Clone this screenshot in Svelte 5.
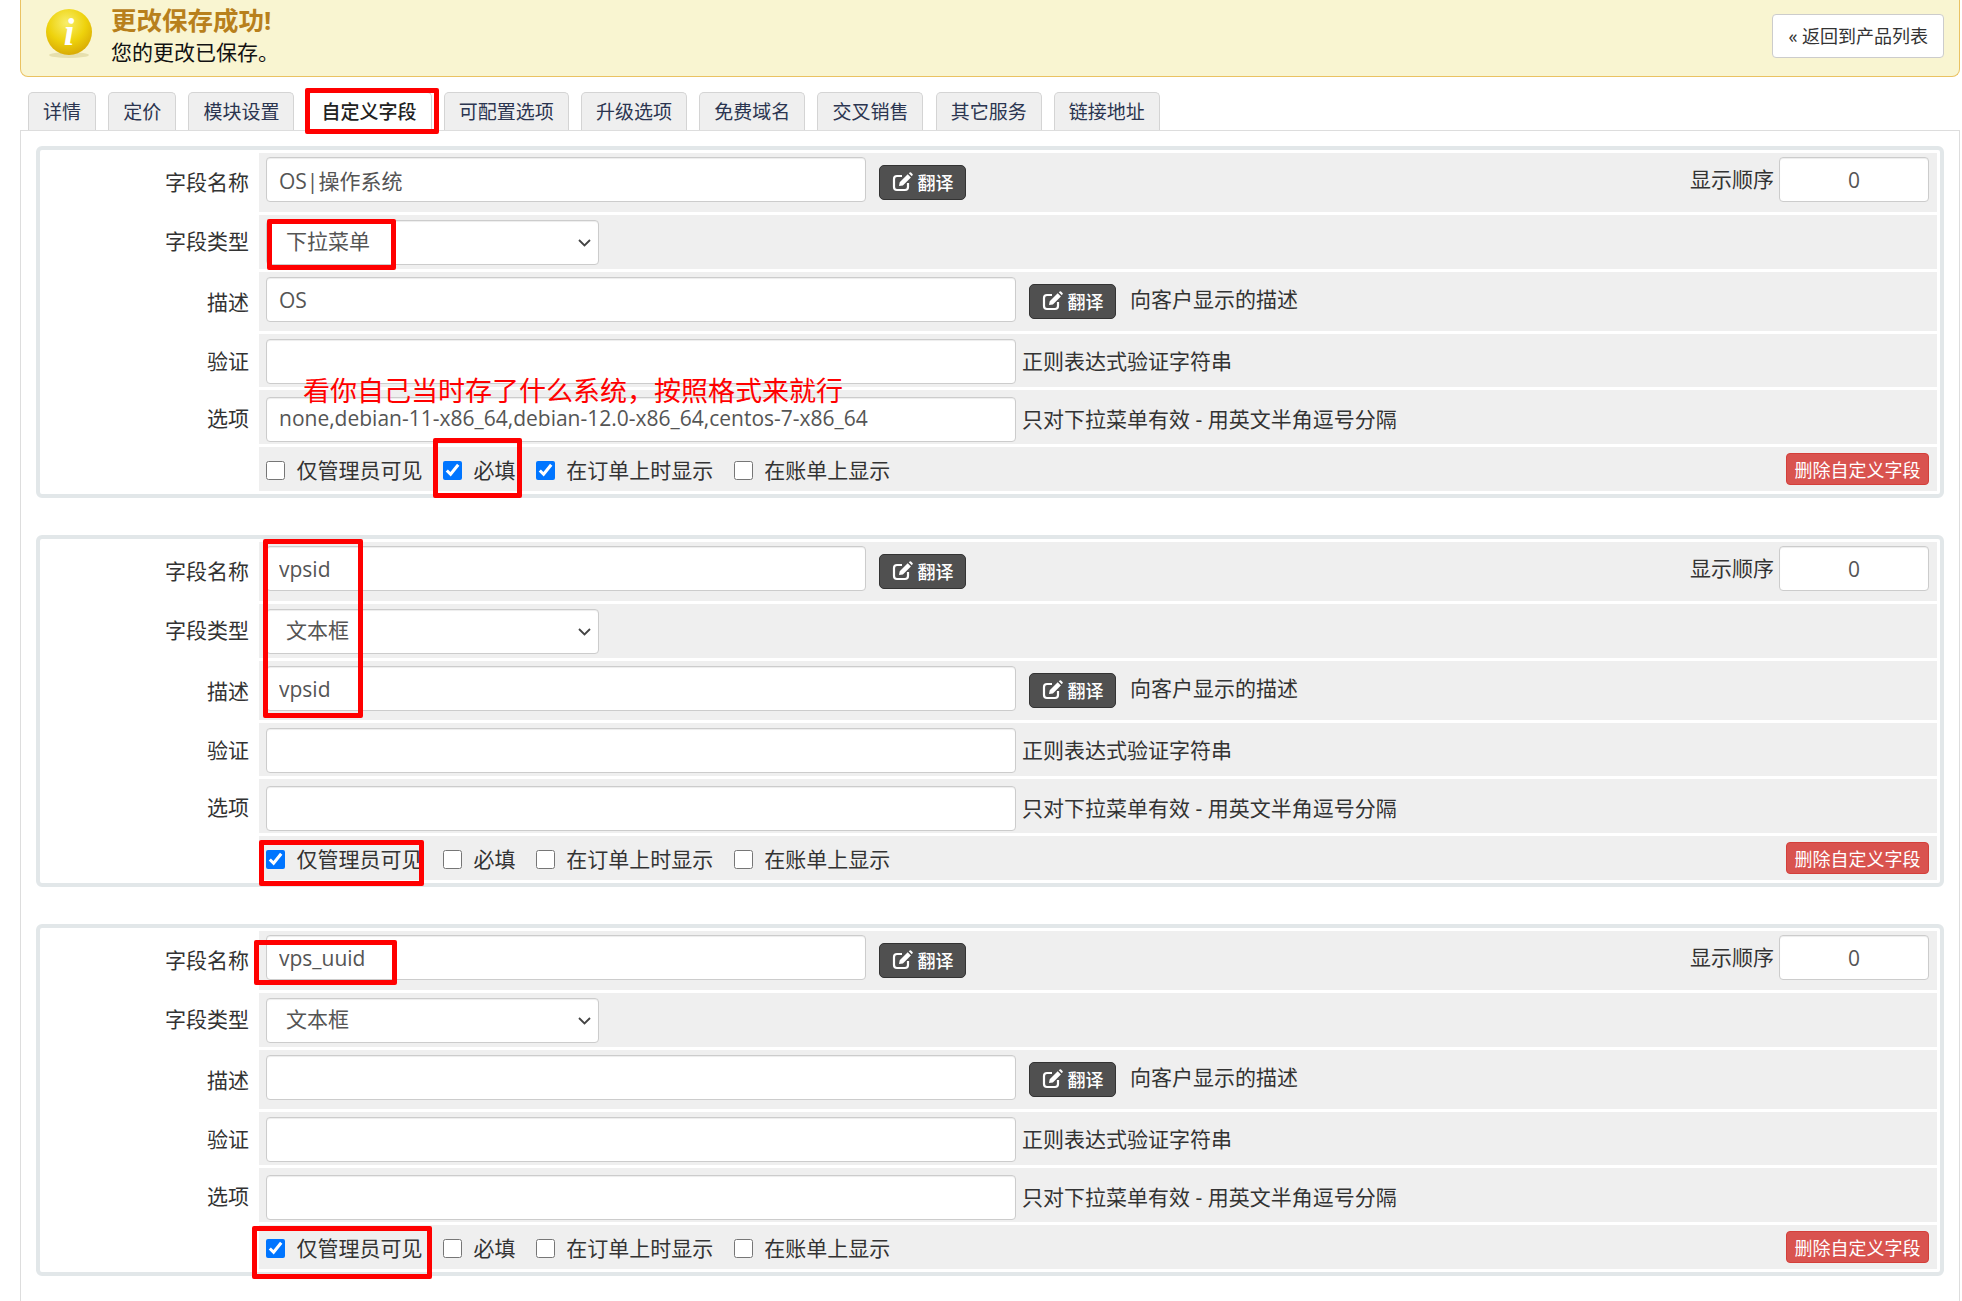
<script>
    const TABS = ["详情", "定价", "模块设置", "自定义字段", "可配置选项", "升级选项", "免费域名", "交叉销售", "其它服务", "链接地址"];

    const FIELDS = [
        { name: "OS|操作系统", type: "下拉菜单", desc: "OS", options: "none,debian-11-x86_64,debian-12.0-x86_64,centos-7-x86_64", admin: false, required: true, order: true },
        { name: "vpsid", type: "文本框", desc: "vpsid", options: "", admin: true, required: false, order: false },
        { name: "vps_uuid", type: "文本框", desc: "", options: "", admin: true, required: false, order: false },
    ];

    const MARKS = [
        { cls: "m-tab" },
        { cls: "m-select" },
        { cls: "m-required" },
        { cls: "m-vpsid" },
        { cls: "m-admin2" },
        { cls: "m-uuid" },
        { cls: "m-admin3" },
    ];
</script>

{#snippet editIcon()}
    <svg class="edit" viewBox="0 0 21 20" width="21" height="20" aria-hidden="true">
        <path d="M10 4H5a3 3 0 0 0-3 3v8a3 3 0 0 0 3 3h8a3 3 0 0 0 3-3v-4" fill="none" stroke="#fff" stroke-width="2.2" />
        <path d="M7 14l.7-3.8 8-8 3.2 3.2-8 8z M16.8 1.2l.9-.7a1 1 0 0 1 1.3 0l1.5 1.5a1 1 0 0 1 0 1.3l-.7.9z" fill="#fff" />
    </svg>
{/snippet}

{#snippet translateBtn()}
    <button class="translate" type="button">{@render editIcon()}<span>翻译</span></button>
{/snippet}

<div class="page">
    <div class="notice">
        <svg class="info" viewBox="0 0 46 50" width="46" height="50" aria-hidden="true">
            <defs>
                <radialGradient id="ball" cx="45%" cy="30%" r="75%">
                    <stop offset="0%" stop-color="#f8ee6a" />
                    <stop offset="55%" stop-color="#eed20c" />
                    <stop offset="100%" stop-color="#d5a404" />
                </radialGradient>
            </defs>
            <ellipse cx="23" cy="46" rx="20" ry="3" fill="#e6dfae" />
            <ellipse cx="23" cy="23" rx="23" ry="23" fill="url(#ball)" />
            <text x="23" y="36" text-anchor="middle" class="info-i">i</text>
        </svg>
        <div class="notice-text">
            <strong>更改保存成功!</strong>
            <span>您的更改已保存。</span>
        </div>
        <a class="back" href="#top">« 返回到产品列表</a>
    </div>

    <ul class="tabs">
        {#each TABS as tab, i}
            <li class:active={i === 3}>{tab}</li>
        {/each}
    </ul>

    <div class="panel">
        {#each FIELDS as field}
            <div class="box">
                <div class="row r1">
                    <label>字段名称</label>
                    <div class="cell">
                        <input class="w-name" type="text" value={field.name} />
                        {@render translateBtn()}
                        <span class="order-label">显示顺序</span>
                        <input class="w-order" type="text" value="0" />
                    </div>
                </div>
                <div class="row r2">
                    <label>字段类型</label>
                    <div class="cell">
                        <select class="w-type" value={field.type}>
                            <option>文本框</option>
                            <option>下拉菜单</option>
                            <option>密码</option>
                        </select>
                    </div>
                </div>
                <div class="row r3">
                    <label>描述</label>
                    <div class="cell">
                        <input class="w-wide" type="text" value={field.desc} />
                        {@render translateBtn()}
                        <span class="hint desc-hint">向客户显示的描述</span>
                    </div>
                </div>
                <div class="row r4">
                    <label>验证</label>
                    <div class="cell">
                        <input class="w-wide" type="text" value="" />
                        <span class="hint">正则表达式验证字符串</span>
                    </div>
                </div>
                <div class="row r5">
                    <label>选项</label>
                    <div class="cell">
                        <input class="w-wide" type="text" value={field.options} />
                        <span class="hint">只对下拉菜单有效 - 用英文半角逗号分隔</span>
                    </div>
                </div>
                <div class="row r6">
                    <div></div>
                    <div class="checks">
                        <label class="check"><input type="checkbox" checked={field.admin} />仅管理员可见</label>
                        <label class="check"><input type="checkbox" checked={field.required} />必填</label>
                        <label class="check"><input type="checkbox" checked={field.order} />在订单上时显示</label>
                        <label class="check"><input type="checkbox" />在账单上显示</label>
                        <button class="delete" type="button">删除自定义字段</button>
                    </div>
                </div>
            </div>
        {/each}
    </div>

    {#each MARKS as mark}
        <div class="mark {mark.cls}"></div>
    {/each}
    <div class="note">看你自己当时存了什么系统，按照格式来就行</div>
</div>

<style>
    :global(body) {
        background: #fff;
    }

    .page {
        position: relative;
        height: 1301px;
        overflow: hidden;
        padding: 0 2px 0 20px;
        box-sizing: border-box;
        font-family: "Open Sans", "Noto Sans CJK SC", sans-serif;
        font-size: 21px;
        color: #333;
    }

    .notice {
        display: flex;
        align-items: flex-start;
        height: 77px;
        box-sizing: border-box;
        background: #f9f5d1;
        border: 1px solid #eac262;
        border-top: 0;
        border-radius: 0 0 8px 8px;
    }

    .info {
        margin: 9px 0 0 25px;
    }

    .info-i {
        font-family: "Liberation Serif", serif;
        font-style: italic;
        font-size: 38px;
        font-weight: 700;
        fill: #fff;
    }

    .notice-text {
        display: flex;
        flex-direction: column;
        margin-left: 19px;
    }

    .notice-text strong {
        font-size: 25.5px;
        line-height: 34px;
        margin-top: 3px;
        color: #b8801c;
    }

    .notice-text span {
        font-size: 21px;
        line-height: 28px;
        margin-top: 1px;
        color: #111;
    }

    .back {
        margin: 14px 15px 0 auto;
        height: 44px;
        box-sizing: border-box;
        padding: 0 15px;
        line-height: 42px;
        font-size: 18px;
        color: #333;
        text-decoration: none;
        background: #fff;
        border: 1px solid #ccc;
        border-radius: 4px;
    }

    .tabs {
        display: flex;
        gap: 12.2px;
        list-style: none;
        margin: 15px 0 0 8px;
        padding: 0;
        height: 38px;
    }

    .tabs li {
        padding: 0 14px;
        line-height: 38px;
        font-size: 19px;
        color: #2b3550;
        background: #efefef;
        border: 1px solid #d4d4d4;
        border-bottom: 0;
        border-radius: 5px 5px 0 0;
    }

    .tabs li.active {
        position: relative;
        z-index: 1;
        height: 39px;
        font-weight: 500;
        color: #222;
        background: #fff;
    }

    .panel {
        display: flex;
        flex-direction: column;
        gap: 37px;
        padding: 15px 15px 60px;
        background: #fff;
        border: 1px solid #ddd;
    }

    .box {
        display: flex;
        flex-direction: column;
        gap: 3px;
        padding: 3px;
        background: #fff;
        border: 4px solid #e2e7e9;
        border-radius: 6px;
    }

    .row {
        display: grid;
        grid-template-columns: 216px 1fr;
        column-gap: 0;
    }

    .row > label {
        padding-right: 10px;
        text-align: right;
        align-self: center;
        line-height: 30px;
    }

    .r1 > label,
    .r2 > label {
        margin-top: -2px;
    }

    .r5 > label {
        margin-top: 2px;
    }

    .cell {
        display: flex;
        align-items: flex-start;
        background: #efefef;
        padding: 0 8px 0 7px;
    }

    .r1 { height: 59px; }
    .r2 { height: 54px; }
    .r3 { height: 59px; }
    .r4 { height: 53px; }
    .r5 { height: 54px; }
    .r6 { height: 44px; }

    .r1 .cell { padding-top: 4px; }
    .r2 .cell { padding-top: 5px; }
    .r3 .cell { padding-top: 5px; }
    .r4 .cell { padding-top: 5px; }
    .r5 .cell { padding-top: 7px; }

    input[type="text"],
    select {
        height: 45px;
        box-sizing: border-box;
        font: inherit;
        color: #555;
        background-color: #fff;
        border: 1px solid #ccc;
        border-radius: 4px;
        box-shadow: inset 0 1px 1px rgba(0, 0, 0, 0.075);
    }

    input[type="text"] {
        padding: 0 12px;
    }

    .r5 input[type="text"] {
        padding-bottom: 4px;
    }

    select {
        appearance: none;
        padding: 0 0 3px 19px;
        background-image: url("data:image/svg+xml,%3Csvg xmlns='http://www.w3.org/2000/svg' width='13' height='8'%3E%3Cpath d='M1 1l5.5 5.5L12 1' fill='none' stroke='%23444' stroke-width='1.8'/%3E%3C/svg%3E");
        background-repeat: no-repeat;
        background-position: right 7px center;
    }

    .w-name { width: 600px; }
    .w-type { width: 333px; }
    .w-wide { width: 750px; }

    .w-order {
        width: 150px;
        margin-left: 5px;
        text-align: center;
    }

    .translate {
        display: flex;
        align-items: center;
        gap: 5px;
        height: 35px;
        width: 87px;
        box-sizing: border-box;
        padding: 0 0 2px 11.5px;
        margin: 8px 0 0 13px;
        font-family: inherit;
        font-size: 18px;
        font-weight: 500;
        color: #fff;
        background: #505050;
        border: 1px solid #333;
        border-radius: 5px;
    }

    .r3 .translate {
        margin-top: 7px;
    }

    .edit {
        flex: none;
    }

    .order-label {
        margin-left: auto;
        line-height: 45px;
    }

    .hint {
        margin-left: 6px;
        line-height: 45px;
    }

    .desc-hint {
        margin-left: 14px;
    }

    .checks {
        display: flex;
        align-items: center;
        gap: 20.4px;
        background: #efefef;
        padding: 0 8px 0 7px;
    }

    .check {
        display: flex;
        align-items: center;
        gap: 11.5px;
    }

    .check input {
        width: 19px;
        height: 19px;
        margin: 2px 0 0;
    }

    .delete {
        margin-left: auto;
        height: 32px;
        width: 143px;
        box-sizing: border-box;
        padding: 0;
        font-family: inherit;
        font-size: 18px;
        color: #fff;
        background: #d9534f;
        border: 1px solid #d43f3a;
        border-radius: 4px;
    }

    .mark {
        position: absolute;
        z-index: 2;
        box-sizing: border-box;
        border: 5px solid #f00;
        border-radius: 2px;
        pointer-events: none;
    }

    .m-tab { left: 305px; top: 88px; width: 134px; height: 46px; }
    .m-select { left: 267px; top: 219px; width: 129px; height: 51px; }
    .m-required { left: 433px; top: 438px; width: 89px; height: 60px; }
    .m-vpsid { left: 263px; top: 539px; width: 100px; height: 179px; }
    .m-admin2 { left: 259px; top: 840px; width: 165px; height: 46px; }
    .m-uuid { left: 254px; top: 940px; width: 143px; height: 45px; }
    .m-admin3 { left: 252px; top: 1226px; width: 180px; height: 53px; }

    .note {
        position: absolute;
        z-index: 2;
        left: 303px;
        top: 373px;
        font-size: 27px;
        line-height: 36px;
        color: #f00;
        white-space: nowrap;
    }
</style>
